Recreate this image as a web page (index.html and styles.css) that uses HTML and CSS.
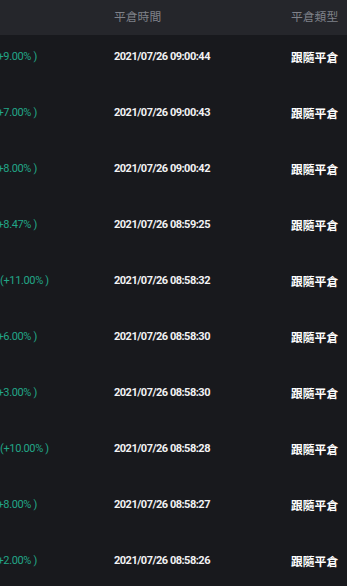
FILE: index.html
```html
<!DOCTYPE html>
<html lang="zh-Hant">
<head>
<meta charset="utf-8">
<link rel="stylesheet" href="styles.css">
</head>
<body>
<div class="table">
  <div class="head">
    <div class="hcell"></div>
    <div class="hcell">平倉時間</div>
    <div class="hcell">平倉類型</div>
  </div>
  <div class="row"><div class="pct one">(+9.00% )</div><div class="time">2021/07/26 09:00:44</div><div class="type">跟隨平倉</div></div>
  <div class="row"><div class="pct one">(+7.00% )</div><div class="time">2021/07/26 09:00:43</div><div class="type">跟隨平倉</div></div>
  <div class="row"><div class="pct one">(+8.00% )</div><div class="time">2021/07/26 09:00:42</div><div class="type">跟隨平倉</div></div>
  <div class="row"><div class="pct one">(+8.47% )</div><div class="time">2021/07/26 08:59:25</div><div class="type">跟隨平倉</div></div>
  <div class="row"><div class="pct">(+11.00% )</div><div class="time">2021/07/26 08:58:32</div><div class="type">跟隨平倉</div></div>
  <div class="row"><div class="pct one">(+6.00% )</div><div class="time">2021/07/26 08:58:30</div><div class="type">跟隨平倉</div></div>
  <div class="row"><div class="pct one">(+3.00% )</div><div class="time">2021/07/26 08:58:30</div><div class="type">跟隨平倉</div></div>
  <div class="row"><div class="pct">(+10.00% )</div><div class="time">2021/07/26 08:58:28</div><div class="type">跟隨平倉</div></div>
  <div class="row"><div class="pct one">(+8.00% )</div><div class="time">2021/07/26 08:58:27</div><div class="type">跟隨平倉</div></div>
  <div class="row"><div class="pct one">(+2.00% )</div><div class="time">2021/07/26 08:58:26</div><div class="type">跟隨平倉</div></div>
</div>
</body>
</html>
```
FILE: styles.css
```css
html, body {
  margin: 0;
  padding: 0;
  background: #18191d;
  height: 100%;
  overflow: hidden;
}
.table {
  font-family: Roboto, "Noto Sans CJK TC", sans-serif;
}
.head, .row {
  display: grid;
  grid-template-columns: 114px 177px 1fr;
}
.head {
  height: 35px;
  background: #25262b;
  align-items: center;
}
.hcell {
  font-family: "Noto Sans CJK TC", sans-serif;
  font-size: 11.8px;
  color: #7f8189;
  line-height: 16px;
  padding-bottom: 4px;
}
.row {
  height: 56px;
  box-sizing: border-box;
  padding-top: 14px;
  line-height: 16px;
}
.pct {
  color: #22a687;
  font-size: 11px;
  letter-spacing: -0.35px;
  white-space: nowrap;
  margin-left: 0;
}
.pct.one {
  margin-left: -6px;
}
.time {
  color: #f2f2f4;
  font-size: 11px;
  font-weight: 700;
  letter-spacing: -0.5px;
  white-space: nowrap;
}
.type {
  font-family: "Noto Sans CJK TC", sans-serif;
  color: #ffffff;
  font-size: 11.8px;
  font-weight: 700;
}
```
